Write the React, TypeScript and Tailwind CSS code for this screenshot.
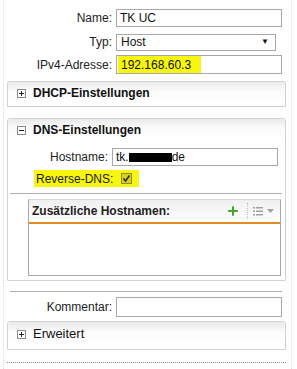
import { Plus } from 'lucide-react';

function ToggleBox({ open }: { open?: boolean }) {
  return (
    <svg width="9" height="9" viewBox="0 0 9 9" className="shrink-0">
      <rect x="0.5" y="0.5" width="8" height="8" fill="#fff" stroke="#8a8a8a" />
      <line x1="2" y1="4.5" x2="7" y2="4.5" stroke="#222" />
      {!open && <line x1="4.5" y1="2" x2="4.5" y2="7" stroke="#222" />}
    </svg>
  );
}

function FieldRow({ label, labelW, children, className = '' }: { label: string; labelW: string; children: React.ReactNode; className?: string }) {
  return (
    <div className={`flex items-center ${className}`}>
      <span className={`${labelW} text-right pr-[4px] text-[12px] text-[#222]`}>{label}</span>
      {children}
    </div>
  );
}

function PanelHeader({ title, open }: { title: string; open?: boolean }) {
  return (
    <div className="flex items-center h-[22px] pl-[9px] gap-[7px] bg-gradient-to-b from-[#e9e9e9] via-[#fbfbfb] via-[40%] to-white rounded-t-[3px]">
      <ToggleBox open={open} />
      <span className="text-[12px] font-bold text-[#111]">{title}</span>
    </div>
  );
}

export default function App() {
  return (
    <div className="w-[297px] h-[369px] bg-white overflow-hidden" style={{ fontFamily: '"Liberation Sans", Arial, sans-serif' }}>
      <div className="ml-[3px] w-[289px] h-[369px] border-x border-dotted border-[#dcdcdc] pt-[9px]">
        <FieldRow label="Name:" labelW="w-[112px]">
          <div className="w-[166px] h-[18px] border border-[#a8a8a8] flex items-center px-[3px] text-[12px] text-[#111]">TK UC</div>
        </FieldRow>
        <FieldRow label="Typ:" labelW="w-[112px]" className="mt-[6px]">
          <div className="w-[160px] h-[17px] border border-[#a8a8a8] flex items-center justify-between pl-[4px] pr-[6px] text-[12px] text-[#111]">
            <span>Host</span>
            <span className="text-[8px]">▼</span>
          </div>
        </FieldRow>
        <FieldRow label="IPv4-Adresse:" labelW="w-[112px]" className="mt-[4px]">
          <div className="w-[166px] h-[19px] border border-[#a8a8a8] flex items-center px-[1px] text-[12px] text-[#111]">
            <span className="bg-[#f6f60e] h-[17px] w-[83px] flex items-center pl-[3px]">192.168.60.3</span>
          </div>
        </FieldRow>

        {/* DHCP */}
        <div className="ml-[3px] mt-[7px] w-[279px] h-[26px] border border-[#d2d2d2] border-b-[#cfcfcf] border-b-dotted rounded-t-[3px]">
          <PanelHeader title="DHCP-Einstellungen" />
        </div>

        {/* DNS */}
        <div className="ml-[3px] mt-[11px] w-[279px] border border-[#d2d2d2] border-b-dotted rounded-t-[3px] pb-[4px]">
          <PanelHeader title="DNS-Einstellungen" open />
          <FieldRow label="Hostname:" labelW="w-[104px]" className="mt-[7px]">
            <div className="w-[166px] h-[18px] border border-[#a8a8a8] flex items-center px-[3px] text-[12px] text-[#111]">
              tk.<span className="inline-block w-[43px] h-[9px] bg-black" />de
            </div>
          </FieldRow>
          <div className="ml-[26px] mt-[4px] w-[105px] h-[17px] bg-[#f6f60e] flex items-center pl-[2px] text-[12px] text-[#222]">
            <span>Reverse-DNS:</span>
            <svg width="11" height="11" viewBox="0 0 11 11" className="ml-[8px]">
              <rect x="0.5" y="0.5" width="10" height="10" fill="#d6d21a" stroke="#8c8a3a" />
              <path d="M2.5 5.5 L4.5 8 L8.5 2.5" fill="none" stroke="#2a2a10" strokeWidth="1.6" />
            </svg>
          </div>
          <div className="ml-[2px] mt-[6px] w-[272px] h-px bg-[#b0b0b0]" />
          <div className="ml-[20px] mt-[5px] w-[253px] h-[77px] border border-[#a8a8a8] border-t-[#d6d6d6] flex flex-col">
            <div className="h-[24px] flex items-center pl-[3px] pr-[6px] bg-gradient-to-b from-[#f0f0f0] to-white border-b-2 border-[#e28c25]">
              <span className="text-[12px] font-bold text-[#222] flex-1">Zusätzliche Hostnamen:</span>
              <Plus size={14} strokeWidth={3.5} color="#4aa52e" />
              <span className="ml-[7px] h-[16px] border-l border-dotted border-[#c0c0c0]" />
              <svg width="10" height="9" viewBox="0 0 10 9" className="ml-[5px]">
                <g fill="#a0a0a0">
                  <rect x="0" y="0" width="2" height="1.5" />
                  <rect x="3" y="0" width="7" height="1.5" />
                  <rect x="0" y="3.5" width="2" height="1.5" />
                  <rect x="3" y="3.5" width="7" height="1.5" />
                  <rect x="0" y="7" width="2" height="1.5" />
                  <rect x="3" y="7" width="7" height="1.5" />
                </g>
              </svg>
              <svg width="7" height="4" viewBox="0 0 7 4" className="ml-[4px]">
                <path d="M0 0 L7 0 L3.5 4 Z" fill="#a0a0a0" />
              </svg>
            </div>
            <div className="flex-1 bg-white" />
          </div>
        </div>

        <div className="ml-[6px] mt-[10px] w-[272px] h-px bg-[#b0b0b0]" />
        <FieldRow label="Kommentar:" labelW="w-[112px]" className="mt-[5px]">
          <div className="w-[166px] h-[20px] border border-[#a8a8a8]" />
        </FieldRow>

        {/* Erweitert */}
        <div className="ml-[3px] mt-[4px] w-[279px] h-[29px] border border-[#d2d2d2] border-b-dotted rounded-t-[3px]">
          <div className="flex items-center h-[24px] pl-[9px] gap-[7px] bg-gradient-to-b from-[#e9e9e9] via-[#fbfbfb] via-[40%] to-white rounded-t-[3px]">
            <ToggleBox />
            <span className="text-[13px] text-[#111]">Erweitert</span>
          </div>
        </div>

        <div className="ml-[3px] mt-[12px] w-[279px] border-t border-dotted border-[#888]" />
      </div>
    </div>
  );
}
